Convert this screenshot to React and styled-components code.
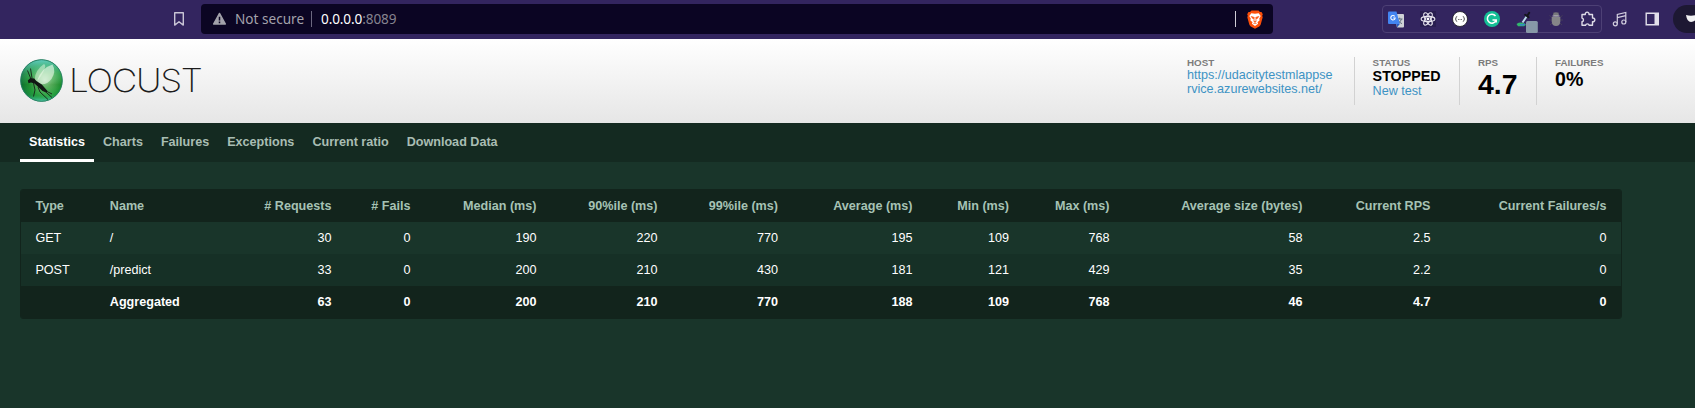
import React from "react";
import styled, { createGlobalStyle } from "styled-components";

const GlobalStyle = createGlobalStyle`
  * { box-sizing: border-box; }
  body { margin: 0; background: #19352a; font-family: "Liberation Sans", Arial, sans-serif; }
`;

const Page = styled.div`
  min-height: 408px;
  overflow: hidden;
  background: #19352a;
`;

/* ---------- browser toolbar ---------- */
const Toolbar = styled.div`
  display: flex;
  align-items: center;
  height: 39px;
  padding: 0 0 1px 173px;
  background: #33255f;
  font-family: "Noto Sans", sans-serif;
  svg { display: block; flex: none; overflow: visible; }
`;
const AddressBar = styled.div`
  display: flex;
  align-items: center;
  width: 1072px;
  height: 30px;
  margin-left: 16px;
  padding: 0 10px 0 11px;
  border-radius: 4px;
  background: #0b0523;
  flex: none;
`;
const Security = styled.span`
  width: 76px;
  margin-left: 8px;
  color: #a3a2ab;
  font-size: 13.6px;
  line-height: 20px;
  white-space: nowrap;
`;
const BarDivider = styled.i`
  width: 1px;
  height: 16px;
  margin-right: ${(p) => (p.$bright ? 11 : 0)}px;
  background: ${(p) => (p.$bright ? "#cfcdd6" : "#6c6880")};
`;
const Url = styled.span`
  flex: 1;
  margin-left: 9px;
  color: #fff;
  font-size: 13.6px;
  letter-spacing: -0.12px;
  line-height: 20px;
`;
const Port = styled.span`
  color: #86838f;
`;
const Extensions = styled.div`
  display: flex;
  align-items: center;
  justify-content: space-between;
  width: 220px;
  height: 28px;
  margin-left: 109px;
  padding: 0 5px;
  border: 1px solid #4d4075;
  border-radius: 4px;
  flex: none;
`;
const Actions = styled.div`
  display: flex;
  align-items: center;
  gap: 17px;
  margin-left: 10px;
  flex: none;
`;
const Profile = styled.div`
  display: flex;
  align-items: center;
  width: 60px;
  height: 28px;
  margin-left: 13px;
  padding-left: 13px;
  border-radius: 14px;
  background: #1d1833;
  flex: none;
`;

/* ---------- page header ---------- */
const Header = styled.header`
  display: flex;
  justify-content: space-between;
  height: 84px;
  padding: 18px 74px 0 20px;
  background: linear-gradient(#fff, #e6e6e6);
`;
const Brand = styled.div`
  display: flex;
  align-items: center;
  height: 46px;
`;
const Wordmark = styled.span`
  margin: 2px 0 0 4.5px;
  color: #1c1c1c;
  font-family: Inter, sans-serif;
  font-size: 32px;
  font-weight: 200;
  letter-spacing: -1.2px;
  line-height: 46px;
  transform: scaleX(1.1);
  transform-origin: left;
`;
const Stats = styled.div`
  display: flex;
  height: 48px;
`;
const Stat = styled.div`
  width: ${(p) => p.$width}px;
  padding-left: ${(p) => p.$pad || 18}px;
  border-left: 1px solid ${(p) => (p.$first ? "transparent" : "#d2d2d2")};
`;
const Label = styled.div`
  color: #7c7c7c;
  font-size: 9.8px;
  font-weight: bold;
  line-height: 11px;
`;
const Value = styled.div`
  color: #000;
  font-size: ${(p) => p.$size}px;
  font-weight: bold;
  line-height: ${(p) => p.$line}px;
`;
const Link = styled.a`
  display: block;
  color: #3d93c4;
  font-size: 12.6px;
  line-height: 14px;
`;

/* ---------- tabs ---------- */
const Tabs = styled.nav`
  display: flex;
  height: 39px;
  padding-left: 20px;
  background: #142a21;
`;
const Tab = styled.a`
  height: 39px;
  padding: 0 9px;
  border-bottom: 3px solid ${(p) => (p.$active ? "#fff" : "transparent")};
  color: ${(p) => (p.$active ? "#fff" : "#a9bdb3")};
  font-size: 12.6px;
  font-weight: bold;
  line-height: 38px;
`;

/* ---------- statistics table ---------- */
const Table = styled.div`
  width: 1602px;
  margin: 27px 0 0 20px;
  border: 1px solid #12241c;
  border-radius: 3px;
  overflow: hidden;
  font-size: 12.6px;
`;
const rowBackground = { head: "#12241c", odd: "#19352a", even: "#163026", total: "#12241c" };
const Row = styled.div`
  display: grid;
  grid-template-columns: 74px 251.5px 79px 126px 121px 120.5px 134.5px 96.5px 100.5px 193px 128px 176px;
  height: 32px;
  line-height: 32px;
  background: ${(p) => rowBackground[p.$kind]};
  color: ${(p) => (p.$kind === "head" ? "#a6c2b4" : "#fff")};
  font-weight: ${(p) => (p.$kind === "head" || p.$kind === "total" ? "bold" : "normal")};
`;
const Cell = styled.span`
  padding: 0 15px 0 14.4px;
  text-align: ${(p) => (p.$left ? "left" : "right")};
  white-space: nowrap;
`;
const NameCell = styled.span`
  display: flex;
  justify-content: space-between;
  padding: 0 15px 0 14.8px;
`;

const columns = ["Type", "Name", "# Requests", "# Fails", "Median (ms)", "90%ile (ms)", "99%ile (ms)", "Average (ms)", "Min (ms)", "Max (ms)", "Average size (bytes)", "Current RPS", "Current Failures/s"];
const rows = [
  ["odd", ["GET", "/", "30", "0", "190", "220", "770", "195", "109", "768", "58", "2.5", "0"]],
  ["even", ["POST", "/predict", "33", "0", "200", "210", "430", "181", "121", "429", "35", "2.2", "0"]],
  ["total", ["", "Aggregated", "63", "0", "200", "210", "770", "188", "109", "768", "46", "4.7", "0"]],
];

function StatsRow({ kind, cells }) {
  const [type, name, requests, ...rest] = cells;
  return (
    <Row $kind={kind}>
      <Cell $left>{type}</Cell>
      <NameCell><span>{name}</span><span>{requests}</span></NameCell>
      {rest.map((c, i) => <Cell key={i}>{c}</Cell>)}
    </Row>
  );
}

/* ---------- icons ---------- */
const BookmarkIcon = () => (
  <svg width="12" height="16" viewBox="0 0 12 16" fill="none" stroke="#c9c5d6" strokeWidth="1.4" strokeLinejoin="round">
    <path d="M1.7 1.7h8.6v12.4L6 10.7l-4.3 3.4z" />
  </svg>
);
const WarningIcon = () => (
  <svg width="15" height="14" viewBox="0 0 15 14">
    <path d="M7.5 1.4 13.4 12H1.6z" fill="#a3a2ab" stroke="#a3a2ab" strokeWidth="1.4" strokeLinejoin="round" />
    <path d="M7.5 4.8v3.6M7.5 9.6v1.6" stroke="#0b0523" strokeWidth="1.5" />
  </svg>
);
const BraveIcon = () => (
  <svg width="16" height="19" viewBox="0 0 16 19">
    <path d="M4.5.5h7l1.5 1.6 1.5-.1 1.3 2.2-.6 1.5.5 1.6-2 7.3q-.4 1.2-1.5 2L8 18.8l-4.2-2.2q-1.100-.8-1.500-2L.3 7.300l.5-1.600L.2 4.200 1.500 2l1.500.1z" fill="#fb4f0a" />
    <path d="M4.300 3.300 8 3.700l3.700-.4 2 2.700-1.500 2.800.5 1.500-2.200 1.900.6 1.500L8 16l-3.100-2.300.6-1.500-2.200-1.900.5-1.500L2.300 6z" fill="#fff" />
    <path d="m4.200 6.500 2.700.8-.4 2zM11.800 6.500l-2.700.8.4 2zM8 7v3.500M6.300 10.800 8 12l1.700-1.200M6.500 13.500 8 12.700l1.500.8" fill="#fb4f0a" stroke="#fb4f0a" strokeWidth=".7" />
  </svg>
);
const TranslateIcon = () => (
  <svg width="16" height="17" viewBox="0 0 16 17">
    <path d="M6 3h9q1 0 1 1v11.500q0 1-1 1H9z" fill="#cfd2d6" />
    <path d="M9 8h5.500M11.700 6.700V8M13.500 8q-.8 3-3.500 4.500M10 9q1 2.500 4 3.700" stroke="#63717f" fill="none" />
    <path d="M1 .5h7.500l3.300 12.500H1q-1 0-1-1V1.500q0-1 1-1z" fill="#4385f1" />
    <path d="m8.300 13 3.500 0-2.800 3.500z" fill="#2a59bd" />
    <path d="M6.700 5.300A2.200 2.200 0 1 0 7.200 7H5.200" stroke="#fff" strokeWidth="1.100" fill="none" />
  </svg>
);
const ReactIcon = () => (
  <svg width="16" height="16" viewBox="0 0 16 16">
    <path d="M0 0h16v16H0z" fill="#291e50" />
    <g fill="none" stroke="#e8e6ef" strokeWidth="1.100">
      <ellipse cx="8" cy="8" rx="6.900" ry="2.600" />
      <ellipse cx="8" cy="8" rx="6.900" ry="2.600" transform="rotate(60 8 8)" />
      <ellipse cx="8" cy="8" rx="6.900" ry="2.600" transform="rotate(120 8 8)" />
    </g>
    <circle cx="8" cy="8" r="1.400" fill="#fff" />
  </svg>
);
const JsonIcon = () => (
  <svg width="16" height="16" viewBox="0 0 16 16">
    <circle cx="8" cy="8" r="7.500" fill="#fff" stroke="#17151d" strokeWidth=".8" />
    <path d="M5.200 5.500q-1.300 0-1.200 1.300T3.200 8q.8 0 .8 1.200t1.200 1.300M10.800 5.500q1.300 0 1.200 1.300T12.800 8q-.8 0-.8 1.200t-1.200 1.300" fill="none" stroke="#444" strokeWidth=".9" />
    <path d="M6 8.500h4" stroke="#777" strokeDasharray="1 .5" />
  </svg>
);
const GrammarlyIcon = () => (
  <svg width="16" height="16" viewBox="0 0 16 16">
    <circle cx="8" cy="8" r="8" fill="#15bf96" />
    <path d="M11.500 5A4.500 4.500 0 1 0 12 9.500M8.500 9H12.200V11.500" fill="none" stroke="#fff" strokeWidth="1.500" />
  </svg>
);
const PickerIcon = () => (
  <svg width="16" height="16" viewBox="0 0 16 16">
    <path d="M.5 13q3-2 5.500-1.300t4 2L8 15.200H2z" fill="#31b96d" />
    <path d="M4 13q3 1 5-1l-1 2.500H4z" fill="#377ed9" />
    <path d="m6.500 11.500 4.500-6.500" stroke="#b9dbe8" strokeWidth="2" />
    <path d="m9.200 3.800 3.300 2.500M11.500 4.500l1.700-2.700" stroke="#15151c" strokeWidth="2" strokeLinecap="round" />
    <rect x="10" y="10" width="11.800" height="12" rx="1.500" fill="#8798a8" />
  </svg>
);
const BugIcon = () => (
  <svg width="16" height="16" viewBox="0 0 16 16">
    <path d="M1.500 4.500 5 7M1 9h14M2 14l3-3M14.500 4.500 11 7M14 14l-3-3M5.500 1l1 2M10.500 1l-1 2" stroke="#443c5a" fill="none" />
    <ellipse cx="8" cy="3.300" rx="2.800" ry="2" fill="#77777c" />
    <path d="M3.700 6h8.600v4.500Q12 15 8 15t-4.300-4.500z" fill="#858588" />
    <path d="M4.500 5h7" stroke="#cacaca" />
  </svg>
);
const PuzzleIcon = () => (
  <svg width="16" height="16" viewBox="0 0 16 16" fill="none" stroke="#dedbe7" strokeWidth="1.400" strokeLinejoin="round">
    <path d="M2 3.500H5.300A1.900 1.900 0 1 1 9 3.500h3.500V7a1.900 1.900 0 1 1 0 3.700v3.600H9.200a1.900 1.900 0 0 0-3.700 0H2v-3.500a1.900 1.900 0 0 0 0-3.700z" />
  </svg>
);
const MusicIcon = () => (
  <svg width="16" height="16" viewBox="0 0 16 16" fill="none" stroke="#d3cfdf" strokeWidth="1.200">
    <circle cx="3.300" cy="12.800" r="2" />
    <circle cx="11.800" cy="11" r="2" />
    <path d="M5.300 12.800V3.500L13.800 1.500V11M5.300 6.600l8.500-2" />
  </svg>
);
const PanelIcon = () => (
  <svg width="15" height="14" viewBox="0 0 15 14">
    <path d="M1.200 1.200h12.100v11.600H1.200z" fill="none" stroke="#e2dfea" strokeWidth="1.400" />
    <path d="M9.500 1h4v12h-4z" fill="#e2dfea" />
  </svg>
);
const MaskIcon = () => (
  <svg width="20" height="10" viewBox="0 0 20 10">
    <path d="M0 1q5 1.500 10 0 5 1.500 10 0-.5 7-5 7-3 0-5-2.500Q8 8 5 8 1 8 0 1z" fill="#f1f1f3" />
  </svg>
);
const LocustLogo = () => (
  <svg width="44" height="44" viewBox="0 0 44 44">
    <defs>
      <radialGradient id="glow" cx=".58" cy=".5" r=".58">
        <stop offset="0" stopColor="#dcf5d6" />
        <stop offset=".3" stopColor="#7fc878" />
        <stop offset=".68" stopColor="#269a35" />
        <stop offset="1" stopColor="#0e6b37" />
      </radialGradient>
      <linearGradient id="shade" x1="0" y1="0" x2="0" y2="1">
        <stop offset="0" stopColor="#66d5cd" stopOpacity=".9" />
        <stop offset=".35" stopColor="#5ac09d" stopOpacity=".25" />
        <stop offset=".6" stopColor="#0b7420" stopOpacity=".35" />
        <stop offset=".85" stopColor="#23ad55" stopOpacity=".3" />
        <stop offset="1" stopColor="#55d2b5" stopOpacity=".9" />
      </linearGradient>
    </defs>
    <circle cx="21.500" cy="22.500" r="21" fill="url(#glow)" />
    <circle cx="21.500" cy="22.500" r="20.800" fill="url(#shade)" stroke="#267f67" strokeWidth=".9" />
    <path d="M14.500 22Q15 12 24 6q3 1-1 8.500t-7 9z" fill="#e4f8e0" opacity=".5" />
    <path d="M17 23Q21 10 32.500 6.500q4 7-1 14.500-5 6.500-12 5z" fill="#f1fcee" opacity=".6" />
    <path d="m7.800 22.500 2.500-2.500 4 .5 2 2.500 5.500 3.500L27.500 33l-1 1.500-4-1.500-8-7.500-3.500-1-2.500.8z" fill="#111713" />
    <path d="M10.500 20 7.500 12.500M12 20l-1.500-9.500M13.500 25l1.500 7-1.500 6.500M18 29l2 5 8 7.500M23 31.500l9 8M27 33.500l5 2.500" stroke="#162019" strokeWidth=".9" fill="none" />
  </svg>
);

export default function App() {
  return (
    <Page>
      <GlobalStyle />
      <Toolbar>
        <BookmarkIcon />
        <AddressBar>
          <WarningIcon />
          <Security>Not secure</Security>
          <BarDivider />
          <Url>0.0.0.0<Port>:8089</Port></Url>
          <BarDivider $bright />
          <BraveIcon />
        </AddressBar>
        <Extensions>
          <TranslateIcon /><ReactIcon /><JsonIcon /><GrammarlyIcon /><PickerIcon /><BugIcon /><PuzzleIcon />
        </Extensions>
        <Actions><MusicIcon /><PanelIcon /></Actions>
        <Profile><MaskIcon /></Profile>
      </Toolbar>
      <Header>
        <Brand><LocustLogo /><Wordmark>LOCUST</Wordmark></Brand>
        <Stats>
          <Stat $first $width={185} $pad={17}>
            <Label>HOST</Label>
            <Link>https://udacitytestmlappse<br />rvice.azurewebsites.net/</Link>
          </Stat>
          <Stat $width={105} $pad={17.6}>
            <Label>STATUS</Label>
            <Value $size={14.3} $line={16}>STOPPED</Value>
            <Link>New test</Link>
          </Stat>
          <Stat $width={77}>
            <Label>RPS</Label>
            <Value $size={28.4} $line={32}>4.7</Value>
          </Stat>
          <Stat $width={85}>
            <Label>FAILURES</Label>
            <Value $size={19.6} $line={22}>0%</Value>
          </Stat>
        </Stats>
      </Header>
      <Tabs>
        {["Statistics", "Charts", "Failures", "Exceptions", "Current ratio", "Download Data"].map((t, i) => (
          <Tab key={t} $active={i === 0}>{t}</Tab>
        ))}
      </Tabs>
      <Table>
        <StatsRow kind="head" cells={columns} />
        {rows.map(([kind, cells]) => <StatsRow key={kind} kind={kind} cells={cells} />)}
      </Table>
    </Page>
  );
}
